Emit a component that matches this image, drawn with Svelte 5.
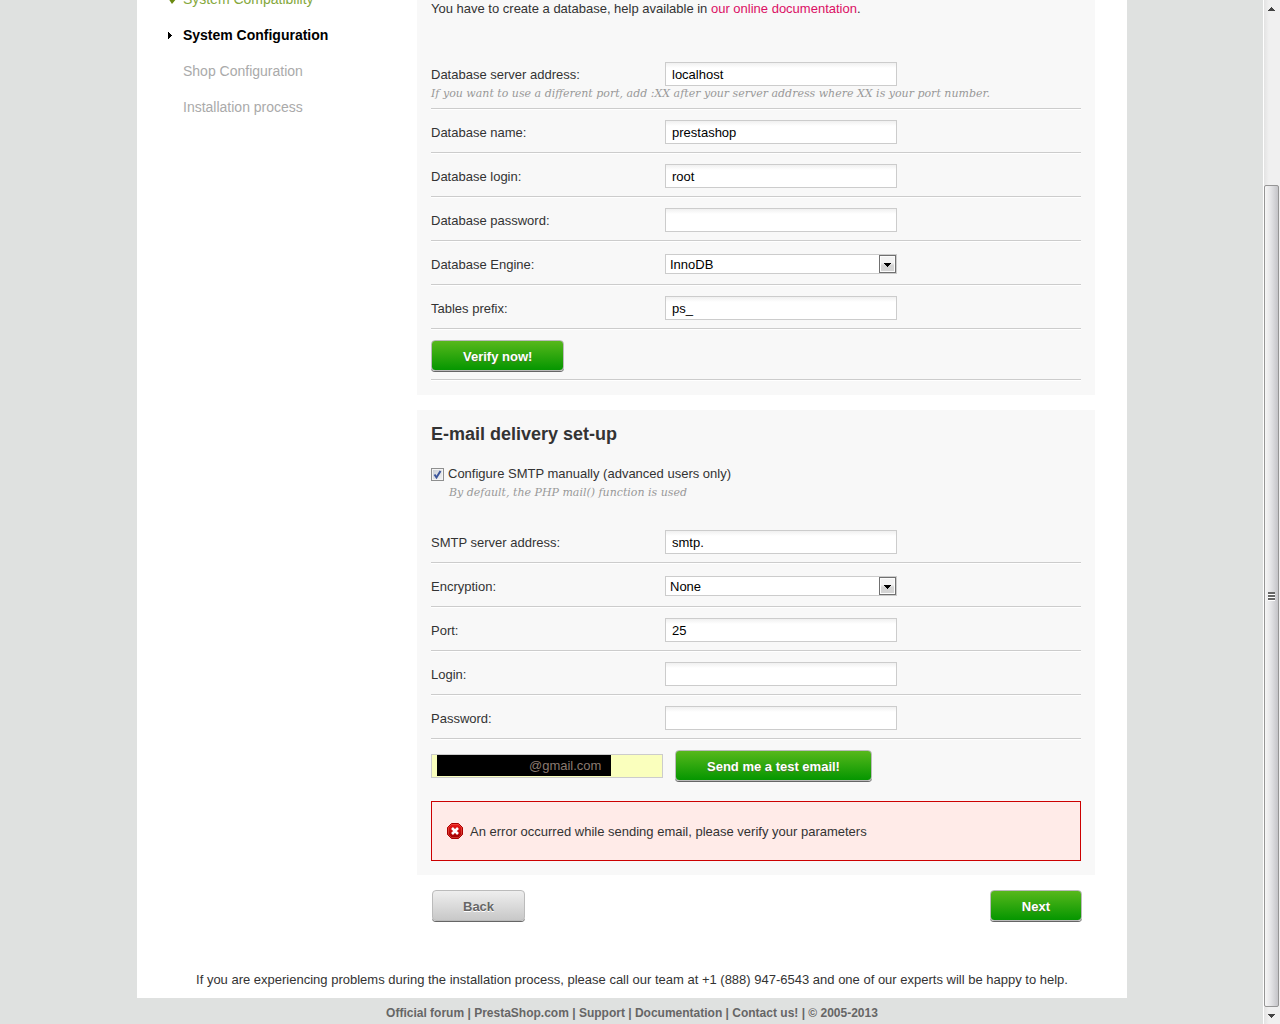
<script>
    let smtpManual = true;
    let testEmail = '@gmail.com';

    const dbFields = [
        { id: 'dbServer', label: 'Database server address:', value: 'localhost', hint: 'If you want to use a different port, add :XX after your server address where XX is your port number.' },
        { id: 'dbName', label: 'Database name:', value: 'prestashop' },
        { id: 'dbLogin', label: 'Database login:', value: 'root' },
        { id: 'dbPassword', label: 'Database password:', value: '', type: 'password' },
        { id: 'dbEngine', label: 'Database Engine:', options: ['InnoDB', 'MyISAM'] },
        { id: 'dbPrefix', label: 'Tables prefix:', value: 'ps_' }
    ];

    const smtpFields = [
        { id: 'smtpSrv', label: 'SMTP server address:', value: 'smtp.' },
        { id: 'smtpEnc', label: 'Encryption:', options: ['None', 'TLS', 'SSL'] },
        { id: 'smtpPort', label: 'Port:', value: '25' },
        { id: 'smtpLogin', label: 'Login:', value: '' },
        { id: 'smtpPassword', label: 'Password:', value: '', type: 'password' }
    ];

    const footerLinks = ['Official forum', 'PrestaShop.com', 'Support', 'Documentation', 'Contact us!'];
</script>

{#snippet field(f)}
    <div class="field">
        <div class="line">
            <label for={f.id}>{f.label}</label>
            {#if f.options}
                <span class="select">
                    <select id={f.id}>
                        {#each f.options as option}
                            <option>{option}</option>
                        {/each}
                    </select>
                    <svg class="arrow" width="18" height="18" viewBox="0 0 18 18">
                        <defs>
                            <linearGradient id="{f.id}-g" x1="0" y1="0" x2="0" y2="1">
                                <stop offset="0.4" stop-color="#f3f3f3" />
                                <stop offset="0.6" stop-color="#d4d4d4" />
                            </linearGradient>
                        </defs>
                        <rect x="0.5" y="0.5" width="16" height="17" fill="#fcfcfc" stroke="#707070" />
                        <rect x="2" y="2" width="13" height="14" fill="url(#{f.id}-g)" />
                        <path d="M5 8h7v1h-1v1h-1v1h-1v1h-1v-1h-1v-1h-1v-1h-1z" fill="#000" />
                    </svg>
                </span>
            {:else}
                <input class="text" id={f.id} type={f.type || 'text'} value={f.value} />
            {/if}
        </div>
        {#if f.hint}
            <p class="hint">{f.hint}</p>
        {/if}
    </div>
{/snippet}

<div class="window">
    <div class="page">
        <div class="container">
            <div class="columns">
                <ol class="steps">
                    <li class="finished">
                        <svg width="10" height="10" viewBox="0 0 10 10"><path d="M1 4 3 1l2 2 2-2 3 3-5 6z" fill="#6b8a12" /></svg>
                        System Compatibility
                    </li>
                    <li class="selected">
                        <svg width="10" height="10" viewBox="0 0 10 10"><path d="M1 2h1v1h1v1h1v1h1v1h-1v1h-1v1h-1v1h-1z" fill="#000" /></svg>
                        System Configuration
                    </li>
                    <li>Shop Configuration</li>
                    <li>Installation process</li>
                </ol>

                <main>
                    <form on:submit|preventDefault>
                        <section class="first">
                            <p class="intro">You have to create a database, help available in <a href="#doc">our online documentation</a>.</p>
                            {#each dbFields as f}
                                {@render field(f)}
                            {/each}
                            <div class="field">
                                <button type="button" class="button">Verify now!</button>
                            </div>
                        </section>

                        <section>
                            <h3>E-mail delivery set-up</h3>
                            <div class="manual">
                                <span class="check">
                                    <input type="checkbox" id="set_stmp" bind:checked={smtpManual} />
                                    {#if smtpManual}
                                        <svg width="13" height="13" viewBox="0 0 13 13"><path d="M3.5 6.5 5.5 9.5 9.5 3" fill="none" stroke="#3c569c" stroke-width="2" /></svg>
                                    {/if}
                                </span>
                                <label for="set_stmp">Configure SMTP manually (advanced users only)</label>
                            </div>
                            <p class="hint indent">By default, the PHP mail() function is used</p>

                            {#each smtpFields as f}
                                {@render field(f)}
                            {/each}

                            <div class="test">
                                <input class="text masked" type="text" aria-label="Test e-mail" bind:value={testEmail} />
                                <button type="button" class="button">Send me a test email!</button>
                            </div>

                            <p class="error">
                                <svg width="16" height="16" viewBox="0 0 16 16">
                                    <defs>
                                        <linearGradient id="err" x1="0" y1="0" x2="0" y2="1">
                                            <stop offset="0" stop-color="#f01818" />
                                            <stop offset="1" stop-color="#9c0000" />
                                        </linearGradient>
                                    </defs>
                                    <path d="M4.5 0.5h7l4 4v7l-4 4h-7l-4-4v-7z" fill="url(#err)" stroke="#a80000" />
                                    <path d="M4.5 1.5h7l3 3v7l-3 3h-7l-3-3v-7z" fill="none" stroke="#f06a5a" stroke-opacity="0.5" />
                                    <path d="M5 5l6 6M11 5l-6 6" stroke="#fff" stroke-width="2.6" />
                                </svg>
                                An error occurred while sending email, please verify your parameters
                            </p>
                        </section>

                        <div class="buttons">
                            <button type="button" class="button little">Back</button>
                            <button type="submit" class="button">Next</button>
                        </div>
                    </form>
                </main>
            </div>
            <p class="phone">If you are experiencing problems during the installation process, please call our team at +1 (888) 947-6543 and one of our experts will be happy to help.</p>
        </div>

        <footer>
            {#each footerLinks as link}
                <a href="#footer">{link}</a>{' | '}
            {/each}
            &copy; 2005-2013
        </footer>
    </div>

    <div class="scrollbar">
        <svg width="15" height="17" viewBox="0 0 15 17"><path d="M7 7h1v1h1v1h1v1h1v1H4v-1h1V9h1V8h1z" fill="#444" /></svg>
        <div class="track">
            <div class="thumb">
                <svg width="7" height="9" viewBox="0 0 7 9"><path d="M0 0h7v2H0zM0 3h7v2H0zM0 6h7v2H0z" fill="#666" /><path d="M0 2.5h7M0 5.5h7M0 8.5h7" stroke="#fff" /></svg>
            </div>
        </div>
        <svg width="15" height="17" viewBox="0 0 15 17"><path d="M4 7h7v1h-1v1H9v1H8v1H7v-1H6V9H5V8H4z" fill="#444" /></svg>
    </div>
</div>

<style>
:global(body) {
    margin: 0;
    background: #dfe1e0;
    font: 13px/18px Arial, "Liberation Sans", sans-serif;
    color: #333;
}

.window {
    display: flex;
    height: 100vh;
    overflow: hidden;
}

.page {
    flex: 1;
    min-width: 0;
    padding-left: 1px;
}

.container {
    max-width: 990px;
    margin: 0 auto;
    background: #fff;
    overflow: hidden;
}

.columns {
    display: flex;
}

.steps {
    width: 280px;
    flex-shrink: 0;
    box-sizing: border-box;
    margin: -19px 0 0;
    padding: 0 0 0 46px;
    list-style: none;
    font-size: 14px;
    line-height: 36px;
    color: #aaa;
}

.steps li svg {
    width: 10px;
    margin-left: -16px;
    margin-right: 2px;
}

.steps .finished {
    color: #85a83c;
}

.steps .selected {
    font-weight: bold;
    color: #000;
}

main {
    flex: 1;
    min-width: 0;
    padding-right: 32px;
}

section {
    background: #f8f8f8;
    padding: 14px;
    margin-bottom: 15px;
}

section.first {
    padding-top: 0;
    padding-bottom: 15px;
}

.intro {
    margin: 0 0 33px;
}

.intro a {
    color: #db0f64;
    text-decoration: none;
}

.field {
    padding: 11px 0 8px;
    border-bottom: 1px solid #ccc;
    box-shadow: 0 1px 0 #fff;
}

.line {
    display: flex;
    align-items: center;
    min-height: 24px;
}

.line label {
    width: 234px;
    padding-top: 2px;
}

.text {
    box-sizing: border-box;
    width: 232px;
    height: 24px;
    padding: 0 6px;
    border: 1px solid #ccc;
    background: #fff linear-gradient(#f0f0f0, #fff 5px);
    font: inherit;
    color: #000;
}

.select {
    position: relative;
    display: flex;
    width: 232px;
}

select {
    appearance: none;
    box-sizing: border-box;
    width: 100%;
    height: 20px;
    padding: 2px 20px 0 4px;
    border: 1px solid #ccc;
    border-radius: 0;
    background: #fff;
    font: inherit;
    line-height: 16px;
    color: #000;
}

.arrow {
    position: absolute;
    top: 1px;
    right: 0;
    pointer-events: none;
}

.hint {
    margin: 0;
    padding-top: 2px;
    font: italic 11px/12px Georgia, "DejaVu Serif", serif;
    color: #999;
}

.hint.indent {
    margin: 2px 0 20px 18px;
}

h3 {
    margin: 0 0 20px;
    font-size: 18px;
    line-height: 20px;
}

.manual {
    display: flex;
    align-items: center;
    gap: 4px;
    margin-top: 21px;
}

.check {
    display: grid;
}

.check > * {
    grid-area: 1 / 1;
}

.check input {
    appearance: none;
    box-sizing: border-box;
    width: 13px;
    height: 13px;
    margin: 0;
    border: 1px solid #8e8f8f;
    background: linear-gradient(135deg, #c8cdd4, #f4f4f4);
    box-shadow: inset 0 0 0 1px #f4f4f4;
}

.check svg {
    pointer-events: none;
}

.button {
    height: 31px;
    padding: 2px 31px 0;
    border: 1px solid #bbb;
    border-radius: 4px;
    background: linear-gradient(#57b81c, #059600);
    box-shadow: 0 1px 0 #666;
    font: bold 13px/18px Arial, "Liberation Sans", sans-serif;
    color: #fff;
    text-shadow: 0 1px 0 #4a7a2a;
}

.button.little {
    padding: 2px 30px 0;
    background: linear-gradient(#eee, #c8c8c8);
    color: #666;
    text-shadow: 0 1px 0 #fff;
}

.test {
    display: flex;
    align-items: center;
    gap: 12px;
    padding-top: 11px;
}

/* the mailbox name stays blacked out */
.masked {
    padding-left: 97px;
    background: #faffbd linear-gradient(#000, #000) 5px 0 / 174px 21px no-repeat;
    color: #8a7a70;
}

.error {
    display: flex;
    align-items: center;
    gap: 7px;
    margin: 20px 0 0;
    padding: 21px 15px 19px;
    border: 1px solid #c00;
    background: #ffebe8;
}

.error svg {
    margin-bottom: 2px;
}

.buttons {
    display: flex;
    justify-content: space-between;
    padding: 0 13px 0 15px;
}

.phone {
    margin: 50px 0 9px;
    text-align: center;
}

footer {
    padding-top: 6px;
    font-size: 12px;
    font-weight: bold;
    text-align: center;
    color: #666;
}

footer a {
    color: inherit;
    text-decoration: none;
}

.scrollbar {
    display: flex;
    flex-direction: column;
    box-sizing: border-box;
    width: 17px;
    padding: 0 1px 0 0;
    border-left: 1px solid #fff;
    background: linear-gradient(90deg, #e3e3e3, #f0f0f0 30%, #f0f0f0);
}

.track {
    flex: 1;
    display: flex;
    flex-direction: column;
    justify-content: flex-end;
}

.thumb {
    display: flex;
    align-items: center;
    justify-content: center;
    height: 83%;
    box-sizing: border-box;
    border: 1px solid #959595;
    border-radius: 2px;
    background: linear-gradient(90deg, #f6f6f6, #e4e4e6 45%, #c4c4c8);
}
</style>
